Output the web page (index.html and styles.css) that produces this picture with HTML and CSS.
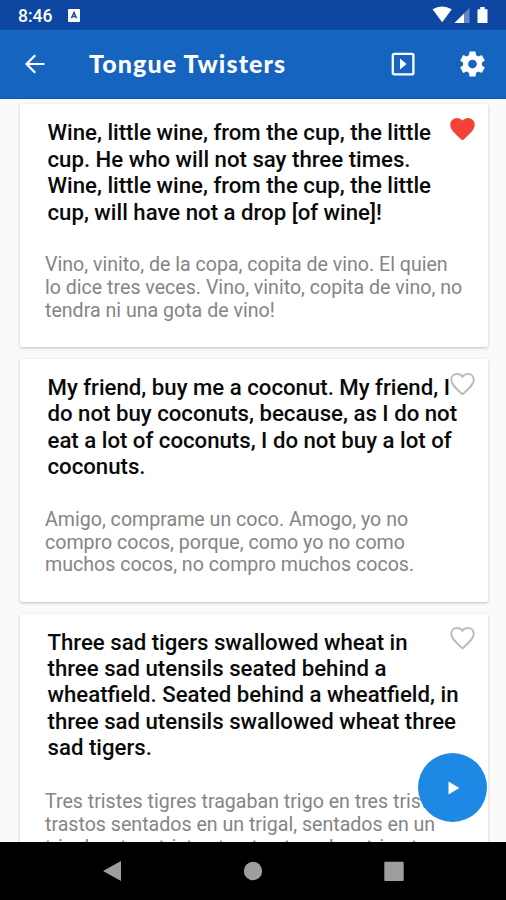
FILE: index.html
```html
<!DOCTYPE html>
<html lang="en">
<head>
<meta charset="utf-8">
<title>Tongue Twisters</title>
<link rel="stylesheet" href="styles.css">
</head>
<body>
<div class="phone">
  <div class="status">
    <span class="time">8:46</span>
    <svg class="note" viewBox="0 0 12 13"><rect width="12" height="13" rx="1" fill="#fff"/><path d="M3.4 9.2 6 3.5l2.6 5.7M4.3 7.5h3.5" fill="none" stroke="#1a469b" stroke-width="1.4"/></svg>
    <svg class="signals" viewBox="0 0 60 18"><path d="M0.5 3.3Q10 -2.2 19.8 3.3L10.2 16.2Z" fill="#fff"/><path d="M22.5 17 37.5 2V17Z" fill="#6688c1"/><path d="M22.5 17 32 7.5V17Z" fill="#fff"/><path d="M45.5 3.2h2.8V1h4.4v2.2h2.8V17h-10z" fill="#fff"/></svg>
  </div>
  <header class="bar">
    <svg class="back" viewBox="0 0 20 20"><path d="M19.5 10H1.5M10.2 1.2 1.5 10l8.7 8.8" fill="none" stroke="#fff" stroke-width="2.2"/></svg>
    <h1>Tongue Twisters</h1>
    <svg class="slideshow" viewBox="0 0 24 24"><rect x="1.8" y="1.8" width="20.6" height="20.6" rx="1.5" fill="none" stroke="#fff" stroke-width="2.3"/><path d="M9 6.5v11l6.5-5.5z" fill="#fff"/></svg>
    <svg class="gear" viewBox="2 2 20 20"><path fill="#fff" d="M19.43 12.98c.04-.32.07-.64.07-.98s-.03-.66-.07-.98l2.11-1.65c.19-.15.24-.42.12-.64l-2-3.46c-.12-.22-.39-.3-.61-.22l-2.49 1c-.52-.4-1.08-.73-1.69-.98l-.38-2.65C14.46 2.18 14.25 2 14 2h-4c-.25 0-.46.18-.49.42l-.38 2.65c-.61.25-1.17.59-1.69.98l-2.49-1c-.23-.09-.49 0-.61.22l-2 3.46c-.13.22-.07.49.12.64l2.11 1.65c-.04.32-.07.65-.07.98s.03.66.07.98l-2.11 1.65c-.19.15-.24.42-.12.64l2 3.46c.12.22.39.3.61.22l2.49-1c.52.4 1.08.73 1.69.98l.38 2.65c.03.24.24.42.49.42h4c.25 0 .46-.18.49-.42l.38-2.65c.61-.25 1.17-.59 1.69-.98l2.49 1c.23.09.49 0 .61-.22l2-3.46c.12-.22.07-.49-.12-.64zM12 15.5A3.5 3.5 0 1 1 12 8.5a3.5 3.5 0 0 1 0 7z"/></svg>
  </header>
  <main class="list">
    <article class="card">
      <svg class="heart" viewBox="2 3 20 18.35"><path fill="#f44336" d="M12 21.35l-1.45-1.32C5.4 15.36 2 12.28 2 8.5 2 5.42 4.42 3 7.5 3c1.74 0 3.41.81 4.5 2.09C13.09 3.81 14.76 3 16.5 3 19.58 3 22 5.42 22 8.5c0 3.78-3.4 6.86-8.55 11.54z"/></svg>
      <h2>Wine, little wine, from the cup, the little<br>cup. He who will not say three times.<br>Wine, little wine, from the cup, the little<br>cup, will have not a drop [of wine]!</h2>
      <p>Vino, vinito, de la copa, copita de vino. El quien<br>lo dice tres veces. Vino, vinito, copita de vino, no<br>tendra ni una gota de vino!</p>
    </article>
    <article class="card">
      <svg class="heart" viewBox="2 3 20 18.35"><path class="outline" d="M12 20.4l-1-.9C6 15 2.8 12 2.8 8.5c0-2.7 2-4.7 4.7-4.7 1.8 0 3.6.9 4.5 2.3.9-1.4 2.7-2.3 4.5-2.3 2.7 0 4.7 2 4.7 4.7 0 3.5-3.2 6.5-8.2 11z"/></svg>
      <h2>My friend, buy me a coconut. My friend, I<br>do not buy coconuts, because, as I do not<br>eat a lot of coconuts, I do not buy a lot of<br>coconuts.</h2>
      <p>Amigo, comprame un coco. Amogo, yo no<br>compro cocos, porque, como yo no como<br>muchos cocos, no compro muchos cocos.</p>
    </article>
    <article class="card">
      <svg class="heart" viewBox="2 3 20 18.35"><path class="outline" d="M12 20.4l-1-.9C6 15 2.8 12 2.8 8.5c0-2.7 2-4.7 4.7-4.7 1.8 0 3.6.9 4.5 2.3.9-1.4 2.7-2.3 4.5-2.3 2.7 0 4.7 2 4.7 4.7 0 3.5-3.2 6.5-8.2 11z"/></svg>
      <h2>Three sad tigers swallowed wheat in<br>three sad utensils seated behind a<br>wheatfield. Seated behind a wheatfield, in<br>three sad utensils swallowed wheat three<br>sad tigers.</h2>
      <p>Tres tristes tigres tragaban trigo en tres tristes<br>trastos sentados en un trigal, sentados en un<br>trigal en tres tristes trastos tragaban trigo tres</p>
    </article>
  </main>
  <div class="fab"><svg viewBox="0 0 12 14"><path d="M.5.5v13L11.3 7z" fill="#fff"/></svg></div>
  <nav class="nav">
    <svg viewBox="0 0 20 22"><path d="M19 1v20L1 11z" fill="#9e9e9e"/></svg>
    <svg viewBox="0 0 20 22"><circle cx="10" cy="11" r="9.2" fill="#9e9e9e"/></svg>
    <svg viewBox="0 0 20 22"><rect x=".3" y="1.8" width="19.4" height="19.2" rx="1" fill="#9e9e9e"/></svg>
  </nav>
</div>
</body>
</html>
```
FILE: styles.css
```css
* { box-sizing: border-box; }
body { margin: 0; font-family: Roboto, sans-serif; }
.phone {
  position: relative;
  width: 506px;
  height: 900px;
  display: flex;
  flex-direction: column;
  overflow: hidden;
  background: #fafafa;
}
.status {
  flex: none;
  height: 30px;
  padding: 0 14px 0 18px;
  display: flex;
  align-items: center;
  background: #0d47a1;
  color: #fff;
}
.time { width: 50px; font-size: 17.5px; font-weight: 500; line-height: 30px; padding-top: 2px; }
.note { width: 12px; height: 13px; }
.signals { width: 60px; height: 18px; margin-left: auto; }
.bar {
  flex: none;
  height: 69px;
  padding: 0 21px 0 25px;
  display: flex;
  align-items: center;
  background: #1565c0;
  border-bottom: 1px solid #0d55ad;
}
.back { width: 20px; height: 20px; }
.bar h1 {
  flex: 1;
  margin: -2px 0 0 44px;
  color: #fff;
  font: 900 25px/30px Lato, sans-serif;
  letter-spacing: 1.1px;
  white-space: nowrap;
}
.slideshow { width: 24px; height: 24px; margin-right: 45px; }
.gear { width: 25px; height: 26px; }
.list {
  flex: 1;
  min-height: 0;
  overflow: hidden;
  padding: 5.3px 18px 0 20px;
  display: flex;
  flex-direction: column;
  gap: 12px;
}
.card {
  position: relative;
  flex: none;
  height: 242.7px;
  padding: 15px 0 0 27.5px;
  border-radius: 2px;
  background: #fff;
  box-shadow: 0 1px 3px rgba(0, 0, 0, 0.24);
}
.card:last-child { height: 280px; }
.heart { position: absolute; top: 13.7px; right: 13px; width: 25px; height: 22.5px; }
.outline { fill: none; stroke: #bdbdbd; stroke-width: 1.6; }
.card h2 {
  margin: 0;
  color: #0a0a0a;
  font-size: 22.2px;
  font-weight: 500;
  line-height: 26.4px;
  white-space: nowrap;
}
.card p {
  margin: 29.2px 0 0 -2.5px;
  color: #858585;
  font-size: 19.6px;
  font-weight: 400;
  line-height: 22.8px;
  white-space: nowrap;
}
.card:last-child p { line-height: 23.3px; }
.fab {
  position: absolute;
  left: 418px;
  top: 753px;
  width: 69px;
  height: 69px;
  border-radius: 50%;
  background: #1e88e5;
  display: flex;
  align-items: center;
  justify-content: center;
}
.fab svg { width: 12px; height: 14px; margin-left: 2px; }
.nav {
  flex: none;
  height: 58px;
  padding: 0 102px;
  display: flex;
  align-items: center;
  justify-content: space-between;
  background: #000;
}
.nav svg { width: 20px; height: 22px; }
```
